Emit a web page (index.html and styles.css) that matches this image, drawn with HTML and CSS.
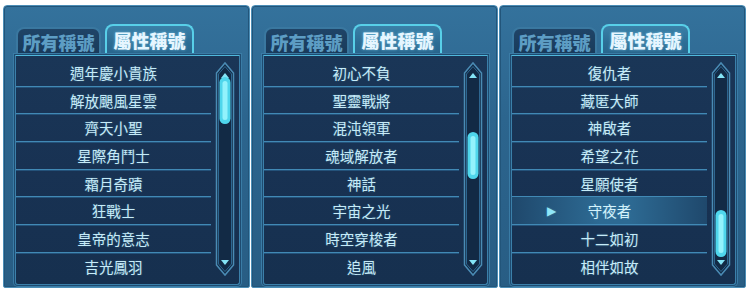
FILE: index.html
```html
<!DOCTYPE html>
<html lang="zh-Hant">
<head>
<meta charset="utf-8">
<title>稱號</title>
<link rel="stylesheet" href="styles.css">
</head>
<body>
<div class="stage">
  <section class="panel">
    <div class="tabs">
      <div class="tab">所有稱號</div>
      <div class="tab active">屬性稱號</div>
    </div>
    <div class="list">
      <ul class="rows">
        <li class="row">週年慶小貴族</li>
        <li class="row">解放颶風星雲</li>
        <li class="row">齊天小聖</li>
        <li class="row">星際角鬥士</li>
        <li class="row">霜月奇蹟</li>
        <li class="row">狂戰士</li>
        <li class="row">皇帝的意志</li>
        <li class="row">吉光鳳羽</li>
      </ul>
      <svg class="scroll" viewBox="0 0 22 220" width="22" height="220">
        <path class="track" d="M2.5 14 L11 4 L19.5 14 V206 L11 216 L2.5 206 Z"/>
        <path class="track-in" d="M4.5 15 L11 7.5 L17.5 15 V205 L11 212.5 L4.5 205 Z"/>
        <polygon class="arrow" points="7,19 11,14 15,19"/>
        <rect class="thumb" x="5.5" y="18" width="11" height="47" rx="5.5"/>
        <rect class="thumb-hi" x="8.5" y="22" width="5" height="39" rx="2.5"/>
        <polygon class="arrow" points="7,201 11,206 15,201"/>
      </svg>
    </div>
  </section>

  <section class="panel">
    <div class="tabs">
      <div class="tab">所有稱號</div>
      <div class="tab active">屬性稱號</div>
    </div>
    <div class="list">
      <ul class="rows">
        <li class="row">初心不負</li>
        <li class="row">聖靈戰將</li>
        <li class="row">混沌領軍</li>
        <li class="row">魂域解放者</li>
        <li class="row">神話</li>
        <li class="row">宇宙之光</li>
        <li class="row">時空穿梭者</li>
        <li class="row">追風</li>
      </ul>
      <svg class="scroll" viewBox="0 0 22 220" width="22" height="220">
        <path class="track" d="M2.5 14 L11 4 L19.5 14 V206 L11 216 L2.5 206 Z"/>
        <path class="track-in" d="M4.5 15 L11 7.5 L17.5 15 V205 L11 212.5 L4.5 205 Z"/>
        <polygon class="arrow" points="7,19 11,14 15,19"/>
        <rect class="thumb" x="5.5" y="73" width="11" height="47" rx="5.5"/>
        <rect class="thumb-hi" x="8.5" y="77" width="5" height="39" rx="2.5"/>
        <polygon class="arrow" points="7,201 11,206 15,201"/>
      </svg>
    </div>
  </section>

  <section class="panel">
    <div class="tabs">
      <div class="tab">所有稱號</div>
      <div class="tab active">屬性稱號</div>
    </div>
    <div class="list">
      <ul class="rows">
        <li class="row">復仇者</li>
        <li class="row">藏匿大師</li>
        <li class="row">神啟者</li>
        <li class="row">希望之花</li>
        <li class="row">星願使者</li>
        <li class="row selected"><span class="marker">▶</span>守夜者</li>
        <li class="row">十二如初</li>
        <li class="row">相伴如故</li>
      </ul>
      <svg class="scroll" viewBox="0 0 22 220" width="22" height="220">
        <path class="track" d="M2.5 14 L11 4 L19.5 14 V206 L11 216 L2.5 206 Z"/>
        <path class="track-in" d="M4.5 15 L11 7.5 L17.5 15 V205 L11 212.5 L4.5 205 Z"/>
        <polygon class="arrow" points="7,19 11,14 15,19"/>
        <rect class="thumb" x="5.5" y="151" width="11" height="47" rx="5.5"/>
        <rect class="thumb-hi" x="8.5" y="155" width="5" height="39" rx="2.5"/>
        <polygon class="arrow" points="7,201 11,206 15,201"/>
      </svg>
    </div>
  </section>
</div>
</body>
</html>
```

FILE: styles.css
```css
* { box-sizing: border-box; }

html, body {
  margin: 0;
  padding: 0;
  background: #ffffff;
}

body {
  font-family: "Noto Sans CJK TC", "Noto Sans CJK SC", "Noto Sans", sans-serif;
  width: 750px;
  height: 290px;
  overflow: hidden;
}

.stage {
  display: flex;
  gap: 1px;
  padding: 5px 0 0 3px;
}

.panel {
  width: 247px;
  height: 283px;
  padding: 18px 9px 2px 11px;
  background: linear-gradient(180deg, #34729c 0%, #2c658e 40%, #285d84 100%);
  border: 1px solid #4b8db6;
  border-radius: 4px 4px 2px 2px;
  display: flex;
  flex-direction: column;
  box-shadow: inset 0 0 0 1px #22557a;
}

.tabs {
  display: flex;
  align-items: flex-end;
  gap: 4px;
  height: 31px;
  padding-left: 1px;
}

.tab {
  width: 85px;
  height: 28px;
  border: 2px solid #3a78a0;
  border-bottom: none;
  border-radius: 8px 8px 0 0;
  background: linear-gradient(180deg, #1f4467, #183a5a);
  color: #5d9dc4;
  font-weight: 900;
  font-size: 18px;
  line-height: 26px;
  text-align: center;
  letter-spacing: 0;
}

.tab.active {
  width: 89px;
  height: 31px;
  border-color: #58cfe8;
  background: linear-gradient(180deg, #3a80a8 0%, #2c6c94 60%, #28658c 100%);
  color: #e6f6ff;
  line-height: 29px;
  text-shadow: 0 0 3px rgba(150, 230, 255, 0.6);
}

.list {
  display: flex;
  gap: 3px;
  padding: 3px 3px 3px 0;
  border: 1px solid #3b80aa;
  border-top: 1px solid #4fb8dc;
  background: linear-gradient(180deg, #1a3657 0%, #183253 50%, #16304f 100%);
  box-shadow: 0 0 0 1px #1e4b70, 0 0 0 2px #3a7ca6;
  border-radius: 0 0 3px 3px;
}

.rows {
  list-style: none;
  margin: 0;
  padding: 0;
  width: 195px;
  display: flex;
  flex-direction: column;
}

.row {
  position: relative;
  height: 27.7px;
  display: flex;
  align-items: center;
  justify-content: center;
  color: #c6ebf8;
  font-size: 14.5px;
  border-bottom: 1px solid #4189b5;
  box-shadow: 0 1px 0 #24527a;
  text-shadow: 0 0 2px rgba(120, 210, 240, 0.35);
}

.row:last-child {
  border-bottom: none;
  box-shadow: none;
}

.row.selected {
  background: linear-gradient(90deg, #1f486c 0%, #2d6a93 45%, #2d6a93 60%, #1f486c 100%);
  color: #d4f2fb;
}

.marker {
  position: absolute;
  left: 35px;
  top: 50%;
  transform: translateY(-50%);
  color: #8ee6f8;
  font-size: 12px;
  font-family: "DejaVu Sans", sans-serif;
}

.scroll {
  display: block;
}

.scroll .track {
  fill: #122a45;
  stroke: #4a8bb4;
  stroke-width: 1.5;
}

.scroll .track-in {
  fill: none;
  stroke: #2d6690;
  stroke-width: 1;
}

.scroll .arrow {
  fill: #84e4f6;
}

.scroll .thumb {
  fill: #4fd6ec;
}

.scroll .thumb-hi {
  fill: #93f2fc;
}
```
